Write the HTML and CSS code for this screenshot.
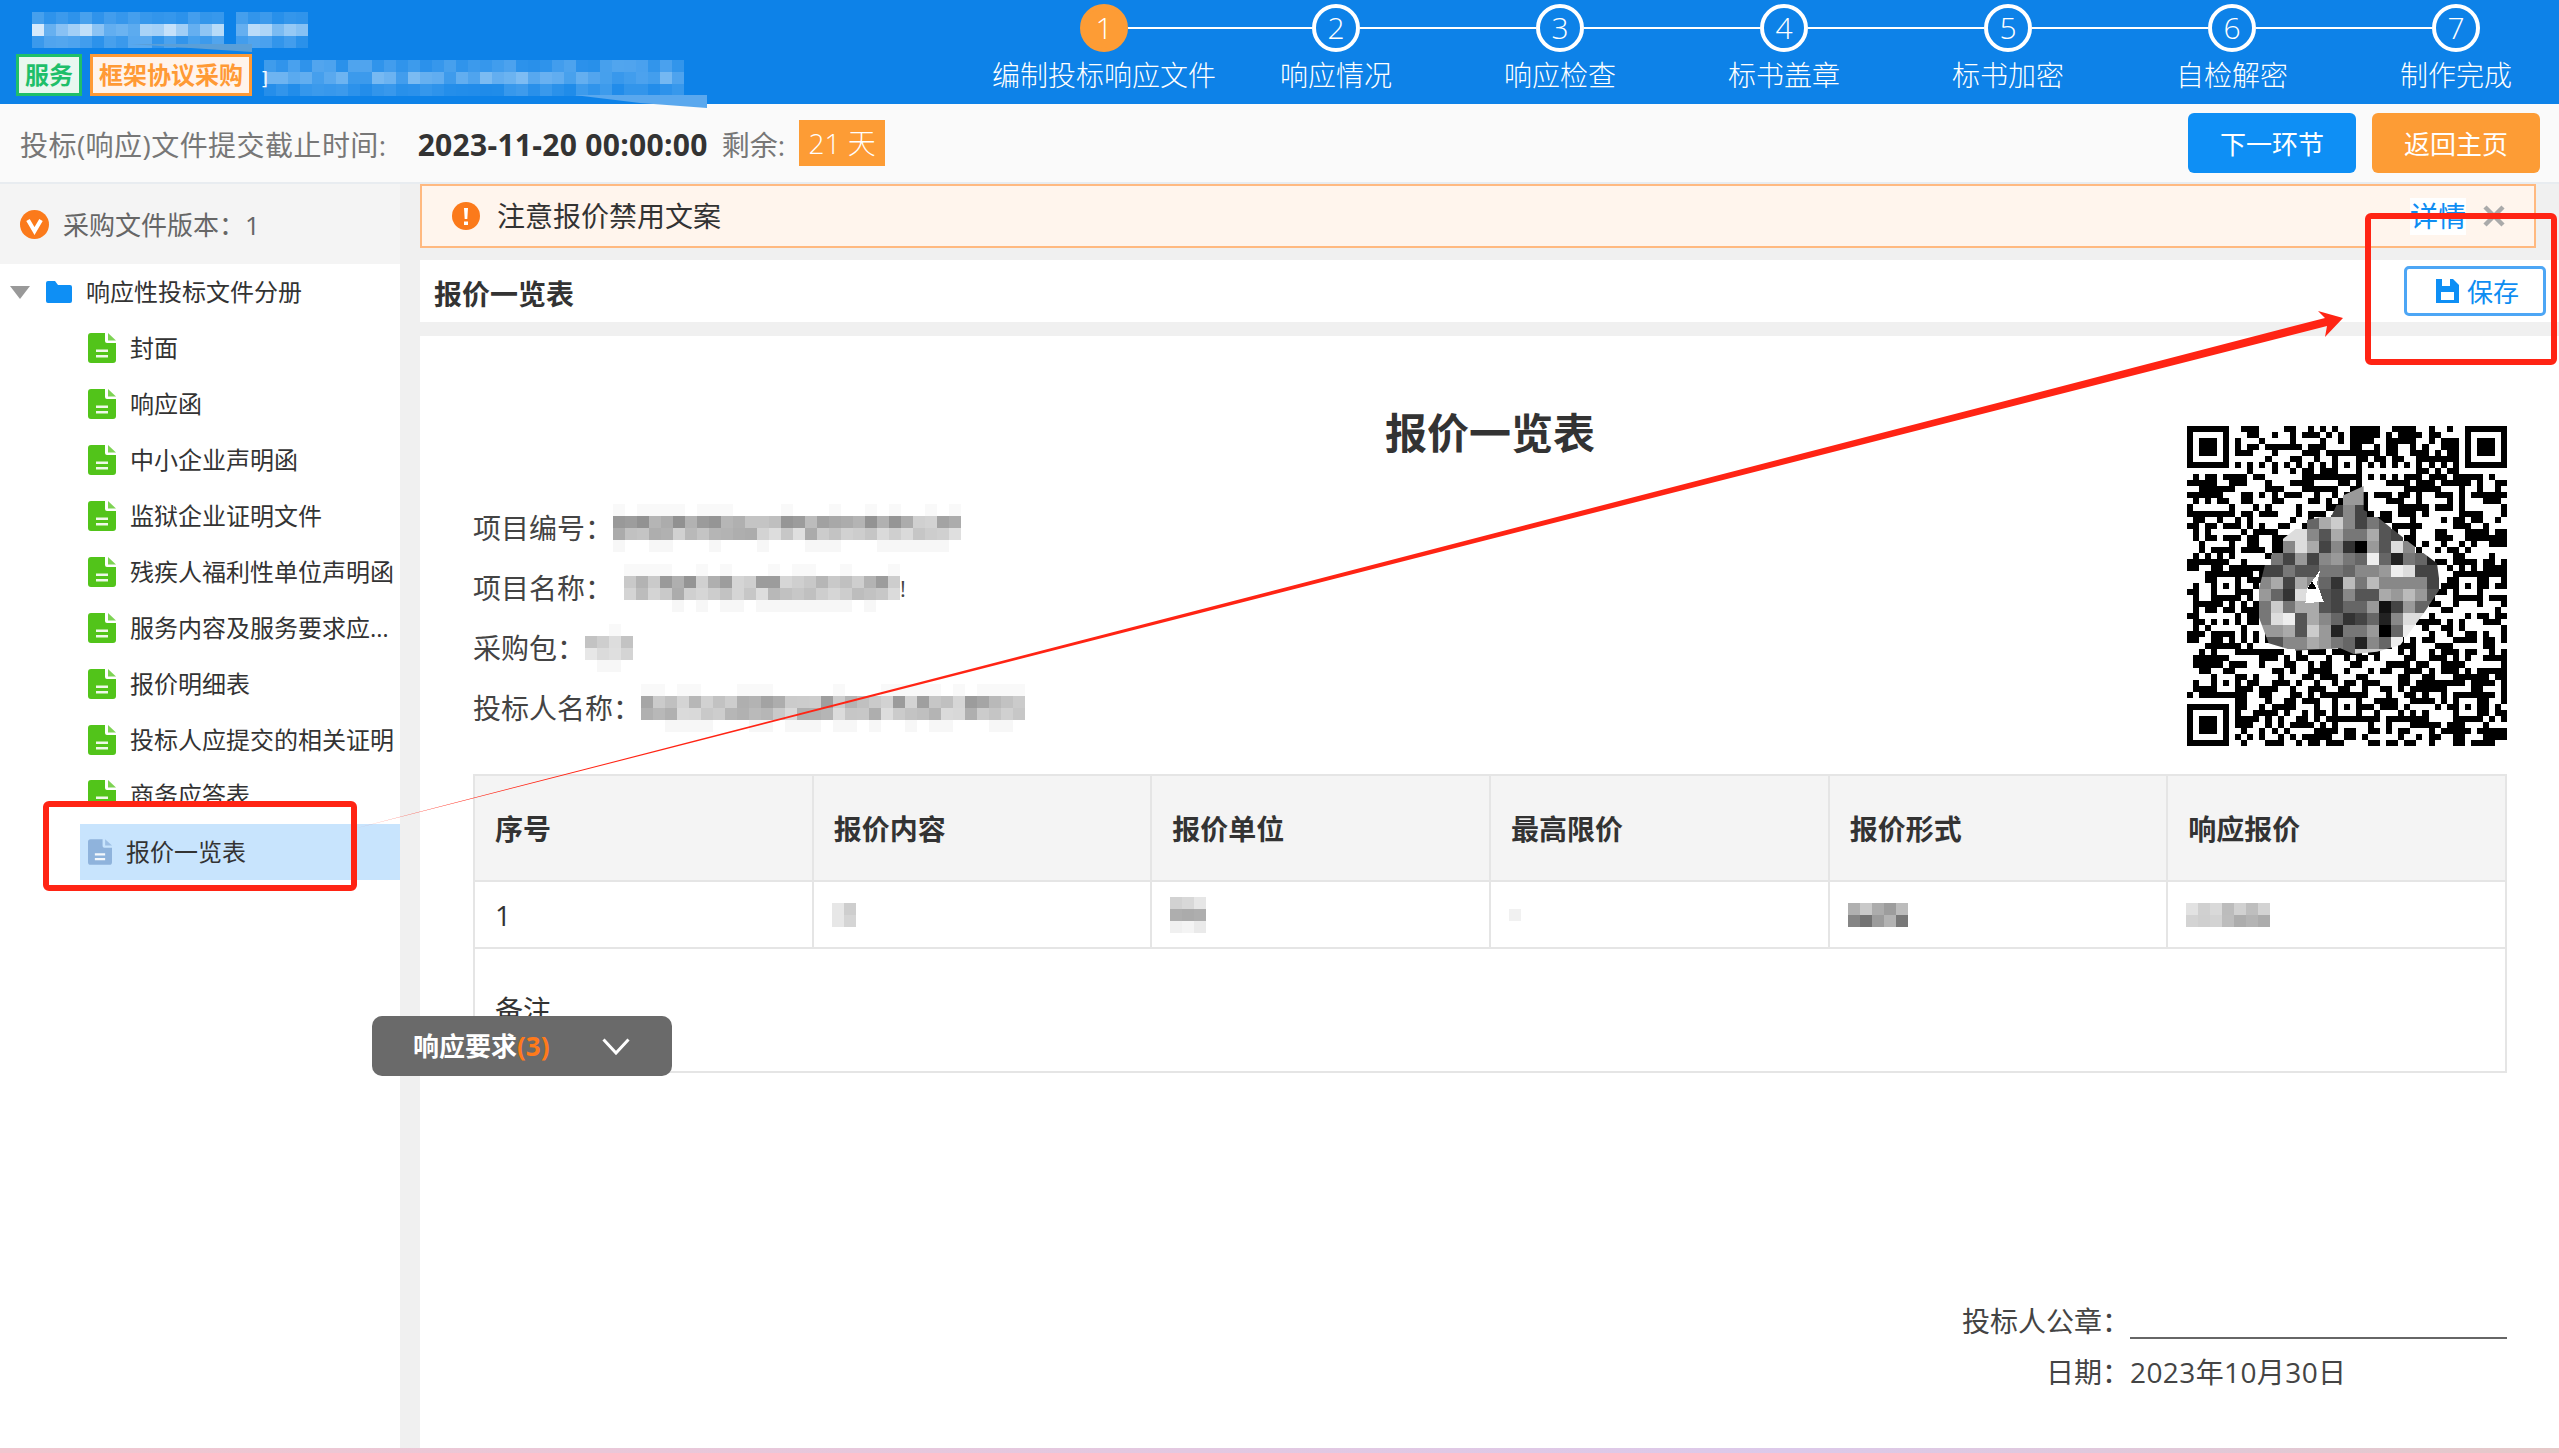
FILE: index.html
```html
<!DOCTYPE html>
<html lang="zh-CN">
<head>
<meta charset="utf-8">
<title>报价一览表</title>
<link rel="stylesheet" href="styles.css">
</head>
<body>
<svg class="defs" width="0" height="0" aria-hidden="true">
  <defs>
    <symbol id="doc" viewBox="0 0 28 30">
      <path d="M0 3Q0 0 3 0H17V8Q17 10 19 10H28V27Q28 30 25 30H3Q0 30 0 27Z" fill="currentColor"/>
      <path d="M20 0L28 7.500H20Z" fill="currentColor" opacity=".75"/>
      <path d="M8 16.500H20V19H8ZM8 22H20V24.500H8Z" fill="#fff" opacity=".9"/>
    </symbol>
  </defs>
</svg>
<div class="page">
  <header class="topbar">
    <div class="brand">
      <div class="brand-top">
        <svg class="mz" data-cols="16" data-rows="3" data-tone="255" data-alpha=".18,.6,.22" data-seed="11"></svg>
        <svg class="mz" data-cols="6" data-rows="3" data-tone="255" data-alpha=".18,.5,.22" data-seed="4"></svg>
      </div>
      <div class="brand-tags">
        <span class="tag tag-green">服务</span>
        <span class="tag tag-orange">框架协议采购</span>
        <span class="brand-frag">]</span>
        <svg class="mz" data-cols="35" data-rows="3" data-tone="255" data-alpha=".2,.32,.14" data-seed="7"></svg>
      </div>
    </div>
    <ol class="steps">
      <li class="step step-first step-on"><span class="step-num">1</span><span class="step-label">编制投标响应文件</span></li>
      <li class="step"><span class="step-num">2</span><span class="step-label">响应情况</span></li>
      <li class="step"><span class="step-num">3</span><span class="step-label">响应检查</span></li>
      <li class="step"><span class="step-num">4</span><span class="step-label">标书盖章</span></li>
      <li class="step"><span class="step-num">5</span><span class="step-label">标书加密</span></li>
      <li class="step"><span class="step-num">6</span><span class="step-label">自检解密</span></li>
      <li class="step step-last"><span class="step-num">7</span><span class="step-label">制作完成</span></li>
    </ol>
  </header>

  <div class="toolbar">
    <span class="tb-label">投标(响应)文件提交截止时间:</span>
    <strong class="tb-date">2023-11-20 00:00:00</strong>
    <span class="tb-left">剩余:</span>
    <span class="tb-badge">21 天</span>
    <div class="tb-actions">
      <button class="btn btn-blue">下一环节</button>
      <button class="btn btn-orange">返回主页</button>
    </div>
  </div>

  <main class="main">
    <aside class="side">
      <div class="side-head">
        <svg class="ico-v" viewBox="0 0 29 29"><circle cx="14.500" cy="14.500" r="14.500" fill="#fb7a1b"/><path d="M8 10L14.500 21L21 10" fill="none" stroke="#fff" stroke-width="4"/></svg>
        <span>采购文件版本：1</span>
      </div>
      <div class="tree-root">
        <span class="caret"></span>
        <svg class="ico-folder" viewBox="0 0 26 22"><path d="M0 2Q0 0 2 0H9L12 4H24Q26 4 26 6V20Q26 22 24 22H2Q0 22 0 20Z" fill="#0e8ff5"/></svg>
        <span>响应性投标文件分册</span>
      </div>
      <ul class="tree">
        <li class="row"><svg class="ico-doc"><use href="#doc"/></svg><span class="row-text">封面</span></li>
        <li class="row"><svg class="ico-doc"><use href="#doc"/></svg><span class="row-text">响应函</span></li>
        <li class="row"><svg class="ico-doc"><use href="#doc"/></svg><span class="row-text">中小企业声明函</span></li>
        <li class="row"><svg class="ico-doc"><use href="#doc"/></svg><span class="row-text">监狱企业证明文件</span></li>
        <li class="row"><svg class="ico-doc"><use href="#doc"/></svg><span class="row-text">残疾人福利性单位声明函</span></li>
        <li class="row"><svg class="ico-doc"><use href="#doc"/></svg><span class="row-text">服务内容及服务要求应答表</span></li>
        <li class="row"><svg class="ico-doc"><use href="#doc"/></svg><span class="row-text">报价明细表</span></li>
        <li class="row"><svg class="ico-doc"><use href="#doc"/></svg><span class="row-text">投标人应提交的相关证明</span></li>
        <li class="row row-cut"><svg class="ico-doc"><use href="#doc"/></svg><span class="row-text">商务应答表</span></li>
        <li class="row row-on"><svg class="ico-doc"><use href="#doc"/></svg><span class="row-text">报价一览表</span></li>
      </ul>
    </aside>

    <section class="content">
      <div class="notice">
        <svg class="ico-warn" viewBox="0 0 28 28"><circle cx="14" cy="14" r="14" fill="#fb7a1b"/><path d="M12 6H16L15.300 17H12.700Z M12 19.500H16V23H12Z" fill="#fff"/></svg>
        <span class="notice-text">注意报价禁用文案</span>
        <a class="notice-link">详情</a>
        <svg class="ico-x" viewBox="0 0 22 22"><path d="M2 2L20 20M20 2L2 20" stroke="#aaa" stroke-width="4.500"/></svg>
      </div>
      <div class="titlebar">
        <strong class="titlebar-text">报价一览表</strong>
        <button class="btn-save">
          <svg class="ico-save" viewBox="0 0 23 24"><path d="M0 0H17L23 6V24H0Z" fill="#0e8ff5"/><path d="M6 0H14V7H6ZM5 13H18V21H5Z" fill="#fff"/></svg>
          <span>保存</span>
        </button>
      </div>
      <article class="doc">
        <div class="doc-top">
          <h1 class="doc-title">报价一览表</h1>
          <div class="fields">
            <div class="field"><span>项目编号：</span><svg class="mz" data-cols="29" data-rows="2" data-tone="60" data-alpha=".4,.3" data-fringe="1" data-seed="21"></svg></div>
            <div class="field"><span>项目名称：</span><svg class="mz mz-gap" data-cols="23" data-rows="2" data-tone="60" data-alpha=".38,.3" data-fringe="1" data-seed="22"></svg><span class="bang">!</span></div>
            <div class="field"><span>采购包：</span><svg class="mz" data-cols="4" data-rows="2" data-tone="90" data-alpha=".3,.2" data-fringe="1" data-seed="23"></svg></div>
            <div class="field"><span>投标人名称：</span><svg class="mz" data-cols="32" data-rows="2" data-tone="60" data-alpha=".36,.3" data-fringe="1" data-seed="24"></svg></div>
          </div>
          <svg id="qr" class="qr" viewBox="110 78 960 960"></svg>
        </div>
        <table class="quote">
          <thead>
            <tr><th>序号</th><th>报价内容</th><th>报价单位</th><th>最高限价</th><th>报价形式</th><th>响应报价</th></tr>
          </thead>
          <tbody>
            <tr class="quote-row">
              <td>1</td>
              <td><svg class="mz mz-cell" data-cols="2" data-rows="2" data-tone="80" data-alpha=".2,.22" data-seed="31"></svg></td>
              <td><svg class="mz mz-cell" data-cols="3" data-rows="3" data-tone="80" data-alpha=".22,.35,.1" data-seed="32"></svg></td>
              <td><svg class="mz mz-cell" data-cols="1" data-rows="1" data-tone="90" data-alpha=".14" data-seed="33"></svg></td>
              <td><svg class="mz mz-cell" data-cols="5" data-rows="2" data-tone="60" data-alpha=".35,.5" data-seed="34"></svg></td>
              <td><svg class="mz mz-cell" data-cols="7" data-rows="2" data-tone="70" data-alpha=".25,.35" data-seed="35"></svg></td>
            </tr>
            <tr class="quote-note"><td colspan="6">备注</td></tr>
          </tbody>
        </table>
        <div class="sign">
          <span class="sign-label">投标人公章：</span><span class="sign-line"></span>
          <span class="sign-label">日期：</span><span class="sign-date">2023年10月30日</span>
        </div>
      </article>
    </section>
  </main>
  <div class="stripe"></div>

  <div class="req-panel">
    <span class="req-text">响应要求<em>(3)</em></span>
    <svg class="ico-chev" viewBox="0 0 28 17"><path d="M1.500 1.500L14 15L26.500 1.500" fill="none" stroke="#fff" stroke-width="3"/></svg>
  </div>

  <svg class="annot" viewBox="0 0 2559 1453" aria-hidden="true">
    <path d="M130 44L252 44V52L160 46Z" fill="#5a9fd8"/>
    <path d="M574 95H707V108L640 103Z" fill="#5aa8ee"/>
    <rect x="46" y="804" width="308" height="84" rx="3" fill="none" stroke="#ff2414" stroke-width="6"/>
    <rect x="2368" y="216" width="186" height="146" rx="3" fill="none" stroke="#ff2414" stroke-width="6"/>
    <path d="M357 828L2325 318L2318 311L2343 318L2325 337L2327 326Z" fill="#ff2414"/>
  </svg>
</div>
<script src="qr.js"></script>
</body>
</html>
```
FILE: styles.css
```css
* { box-sizing: border-box; }
html, body { margin: 0; padding: 0; overflow: hidden; }
body {
  width: 2559px;
  height: 1453px;
  font-family: "Open Sans", "Noto Sans CJK SC", sans-serif;
  font-size: 28px;
  color: #333;
  background: #fff;
}
ol, ul { list-style: none; margin: 0; padding: 0; }
button { font-family: inherit; border: 0; padding: 0; cursor: pointer; }
.defs { display: block; height: 0; }
.page { position: relative; display: flex; flex-direction: column; width: 2559px; height: 1453px; overflow: hidden; }
.mz { display: block; flex: none; overflow: visible; shape-rendering: crispEdges; }

/* header */
.topbar { flex: none; display: flex; height: 104px; background: #0d82e8; color: #fff; }
.brand { flex: none; width: 984px; padding: 12px 0 0 16px; }
.brand-top { display: flex; gap: 12px; height: 36px; margin-left: 16px; }
.brand-tags { display: flex; align-items: flex-start; margin-top: 6px; }
.tag { display: flex; align-items: center; justify-content: center; height: 42px; font-size: 24px; font-weight: 700; line-height: 1; }
.tag-green { width: 66px; border: 3px solid #1fbf6a; background: #e9f7f0; color: #1fbf6a; }
.tag-orange { width: 162px; margin-left: 8px; border: 3px solid #ff9a35; background: #fff4ec; color: #ff9a35; }
.brand-frag { width: 2px; margin-left: 10px; margin-top: 10px; font-size: 18px; line-height: 26px; }
.brand-tags .mz { margin-top: 6px; }
.steps { flex: none; display: flex; padding-top: 4px; }
.step { position: relative; flex: none; width: 224px; display: flex; flex-direction: column; align-items: center; }
.step-first { width: 240px; }
.step::after { content: ""; position: absolute; top: 23px; left: calc(50% + 24px); width: 176px; height: 2px; background: #fff; }
.step-first::after { width: 184px; }
.step-last::after { display: none; }
.step-num { display: flex; align-items: center; justify-content: center; width: 48px; height: 48px; border: 4px solid #fff; border-radius: 50%; font-size: 30px; font-weight: 300; line-height: 1; }
.step-on .step-num { background: #fd9c35; border-color: #fd9c35; }
.step-label { margin-top: 5px; font-size: 28px; font-weight: 300; line-height: 36px; white-space: nowrap; }

/* toolbar */
.toolbar { flex: none; display: flex; align-items: center; height: 80px; padding: 0 19px 0 20px; background: #fafafa; border-bottom: 2px solid #e8ecf0; line-height: 40px; }
.tb-label, .tb-left { margin-top: 3px; color: #777; }
.tb-label { letter-spacing: .45px; }
.tb-date { margin-top: 3px; margin-left: 31px; font-size: 30px; font-weight: 700; color: #333; letter-spacing: .3px; }
.tb-left { margin-left: 14px; }
.tb-badge { display: flex; align-items: center; justify-content: center; width: 86px; height: 46px; margin-left: 14px; background: #fd9c35; color: #fff; font-size: 28px; font-weight: 300; }
.tb-actions { display: flex; gap: 16px; margin-left: auto; }
.btn { width: 168px; height: 60px; border-radius: 6px; color: #fff; font-size: 26px; }
.btn-blue { background: #0e8ff5; }
.btn-orange { background: #fd9c35; }

/* layout */
.main { flex: 1; min-height: 0; display: flex; background: #f0f0f0; }
.side { flex: none; width: 400px; background: #fff; overflow: hidden; }
.side-head { display: flex; align-items: center; gap: 14px; height: 80px; padding-left: 20px; background: #f4f4f4; color: #666; font-size: 26px; }
.ico-v { width: 29px; height: 29px; flex: none; }
.tree-root { display: flex; align-items: center; height: 56px; padding-left: 10px; font-size: 24px; line-height: 40px; }
.caret { width: 0; height: 0; border: 10px solid transparent; border-top: 13px solid #999; border-bottom: 0; }
.ico-folder { width: 26px; height: 22px; margin: 0 14px 0 16px; flex: none; }
.row { display: flex; align-items: center; height: 56px; padding-left: 88px; font-size: 24px; }
.ico-doc { flex: none; width: 28px; height: 30px; color: #52c41a; }
.row-text { width: 266px; margin-left: 14px; line-height: 40px; white-space: nowrap; overflow: hidden; text-overflow: ellipsis; }
.row-cut { height: 33px; margin-bottom: 23px; overflow: hidden; align-items: flex-start; padding-top: 12px; }
.row-cut .row-text { margin-top: -5px; }
.row-on { margin-left: 80px; padding-left: 8px; background: #c8e4fd; }
.row-on .ico-doc { width: 24px; height: 28px; color: #8fb3dc; }

/* content */
.content { flex: 1; min-width: 0; margin-left: 20px; display: flex; flex-direction: column; }
.notice { flex: none; display: flex; align-items: center; height: 64px; margin-right: 23px; padding: 0 29px 0 30px; background: #fff5ed; border: 2px solid #ffb980; }
.ico-warn { width: 28px; height: 28px; flex: none; }
.notice-text { margin-left: 17px; line-height: 40px; }
.notice-link { margin-left: auto; padding: 0; height: 37px; background: #fff; color: #0e8df2; line-height: 37px; }
.ico-x { width: 22px; height: 22px; margin-left: 17px; flex: none; }
.titlebar { flex: none; display: flex; align-items: center; justify-content: space-between; height: 62px; margin-top: 12px; padding: 0 13px 0 14px; background: #fff; }
.titlebar-text { margin-top: 3px; }
.btn-save { display: flex; align-items: center; gap: 8px; width: 142px; height: 50px; padding-left: 29px; border: 3px solid #4da6f5; border-radius: 5px; background: #fff; color: #0e8df2; font-size: 26px; }
.ico-save { width: 23px; height: 24px; flex: none; }

/* document */
.doc { flex: 1; min-height: 0; margin-top: 14px; padding: 67px 52px 0 53px; background: #fff; overflow: hidden; }
.doc-top { display: grid; grid-template-columns: 1fr 320px; grid-template-rows: 60px 1fr; }
.doc-title { grid-column: 1 / 3; grid-row: 1; margin: 0; text-align: center; font-size: 42px; font-weight: 700; line-height: 60px; }
.fields { grid-column: 1; grid-row: 2; margin-top: 35px; color: #444; }
.field { display: flex; align-items: center; height: 60px; line-height: 40px; }
.mz-gap { margin-left: 11px; }
.bang { font-size: 22px; }
.qr { grid-column: 2; grid-row: 1 / 3; width: 320px; height: 320px; margin-top: 23px; shape-rendering: crispEdges; }
.quote { width: 2034px; margin-top: 28px; border-collapse: collapse; table-layout: fixed; }
.quote th, .quote td { border: 2px solid #e5e5e5; padding: 0 20px; text-align: left; line-height: 40px; }
.quote th { height: 106px; padding-top: 2px; background: #f4f4f4; font-weight: 700; }
.quote-row td { height: 67px; font-size: 28px; }
.quote-note td { height: 124px; }
.mz-cell { margin-left: -2px; }
.sign { display: grid; grid-template-columns: auto 377px; width: max-content; margin: 223px 0 0 auto; color: #444; line-height: 51px; }
.sign-label { text-align: right; }
.sign-line { height: 43px; border-bottom: 2px solid #666; }
.sign-date { letter-spacing: .4px; }

/* overlays */
.req-panel { position: absolute; left: 372px; top: 1016px; display: flex; align-items: center; width: 300px; height: 60px; padding-left: 41px; background: #6a6a6a; border-radius: 10px; }
.req-text { width: 148px; color: #fff; font-size: 26px; font-weight: 700; line-height: 40px; white-space: nowrap; }
.req-text em { color: #ff7a1a; font-style: normal; }
.ico-chev { width: 28px; height: 17px; margin-left: 41px; flex: none; }
.annot { position: absolute; left: 0; top: 0; width: 2559px; height: 1453px; pointer-events: none; }
.stripe { flex: none; height: 5px; background: linear-gradient(90deg, #f1c6cf, #dcc9ea 70%, #e6c8c8); }
```
FILE: qr.js
```js
(function () {
  var NS = 'http://www.w3.org/2000/svg';
  function rng(seed) {
    var s = seed * 2654435761 >>> 0;
    return function () {
      s ^= s << 13; s >>>= 0;
      s ^= s >>> 17;
      s ^= s << 5; s >>>= 0;
      return s / 4294967296;
    };
  }
  function rect(parent, x, y, w, h, fill) {
    var r = document.createElementNS(NS, 'rect');
    r.setAttribute('x', x); r.setAttribute('y', y);
    r.setAttribute('width', w); r.setAttribute('height', h);
    r.setAttribute('fill', fill);
    parent.appendChild(r);
  }

  /* pixelated redaction blocks */
  document.querySelectorAll('.mz').forEach(function (el) {
    var cols = +el.dataset.cols, rows = +el.dataset.rows, tone = el.dataset.tone;
    var alpha = el.dataset.alpha.split(',').map(Number);
    var rand = rng(+el.dataset.seed + 1), cell = 12;
    el.setAttribute('width', cols * cell);
    el.setAttribute('height', rows * cell);
    for (var y = 0; y < rows; y++) {
      for (var x = 0; x < cols; x++) {
        var a = alpha[y] * (0.55 + rand() * 0.9);
        rect(el, x * cell, y * cell, cell, cell, 'rgba(' + tone + ',' + tone + ',' + tone + ',' + a.toFixed(3) + ')');
      }
    }
    if (el.dataset.fringe) {
      for (var i = 0; i < cols; i++) {
        if (rand() > 0.4) rect(el, i * cell, -cell, cell, cell, 'rgba(0,0,0,.025)');
        if (rand() > 0.4) rect(el, i * cell, rows * cell, cell, cell, 'rgba(0,0,0,.03)');
      }
    }
  });

  /* QR code: 53 modules, coordinates match the 960-unit viewBox */
  var qr = document.getElementById('qr');
  var N = 53, m = 960 / N, ox = 110, oy = 78, grid = [], rand = rng(97), r, c;
  for (r = 0; r < N; r++) {
    grid[r] = [];
    for (c = 0; c < N; c++) grid[r][c] = rand() > 0.5 ? 1 : 0;
  }
  for (c = 0; c < N; c++) { grid[6][c] = c % 2 ? 0 : 1; grid[c][6] = c % 2 ? 0 : 1; }
  function finder(cx, cy) {
    for (var y = -1; y < 8; y++) for (var x = -1; x < 8; x++) {
      var yy = cy + y, xx = cx + x;
      if (yy < 0 || xx < 0 || yy >= N || xx >= N) continue;
      var ring = x === 0 || x === 6 || y === 0 || y === 6;
      var core = x >= 2 && x <= 4 && y >= 2 && y <= 4;
      var inside = x >= 0 && x <= 6 && y >= 0 && y <= 6;
      grid[yy][xx] = inside && (ring || core) ? 1 : 0;
    }
  }
  function align(cx, cy) {
    for (var y = -2; y <= 2; y++) for (var x = -2; x <= 2; x++) {
      var edge = Math.max(Math.abs(x), Math.abs(y));
      grid[cy + y][cx + x] = edge === 1 ? 0 : 1;
    }
  }
  [26, 46].forEach(function (a) { align(a, 6); align(6, a); });
  [26, 46].forEach(function (a) { [26, 46].forEach(function (b) { align(a, b); }); });
  finder(0, 0); finder(N - 7, 0); finder(0, N - 7);
  for (r = 0; r < N; r++) {
    c = 0;
    while (c < N) {
      if (!grid[r][c]) { c++; continue; }
      var start = c;
      while (c < N && grid[r][c]) c++;
      rect(qr, ox + start * m, oy + r * m, (c - start) * m, m, '#000');
    }
  }

  /* mosaic blob over the middle of the code */
  var defs = document.createElementNS(NS, 'defs');
  var clip = document.createElementNS(NS, 'clipPath');
  clip.id = 'blob';
  var poly = document.createElementNS(NS, 'polygon');
  poly.setAttribute('points', '640,258 570,290 545,345 470,360 400,415 345,490 325,570 325,650 355,730 430,752 570,745 610,762 680,755 750,735 820,640 870,565 860,490 780,430 680,350 640,330');
  clip.appendChild(poly); defs.appendChild(clip); qr.appendChild(defs);
  var g = document.createElementNS(NS, 'g');
  g.setAttribute('clip-path', 'url(#blob)');
  qr.appendChild(g);
  [
    '.......99......', '.......99......', '......484......', '....6ac8475....',
    '..dd85a77a54...', '..8da483095d8..', '.74948976e62762', '44755776889ed44',
    '8a4a863b7b88884', '963dd54855a9b95', '7c7aa5466914966', '7de5a8634628dd.',
    '99a5c9277906e..', '5588a976286e...', '...75556ccc....'
  ].forEach(function (row, y) {
    row.split('').forEach(function (ch, x) {
      if (ch === '.') return;
      var v = parseInt(ch, 16) * 17;
      rect(g, 325 + x * 36, 242 + y * 36, 36, 36, 'rgb(' + v + ',' + v + ',' + v + ')');
    });
  });
  [['510,510 470,565 465,610 520,605 500,550', '#fff'], ['485,545 470,568 500,568', '#000']].forEach(function (p) {
    var e = document.createElementNS(NS, 'polygon');
    e.setAttribute('points', p[0]); e.setAttribute('fill', p[1]);
    qr.appendChild(e);
  });
})();
```
